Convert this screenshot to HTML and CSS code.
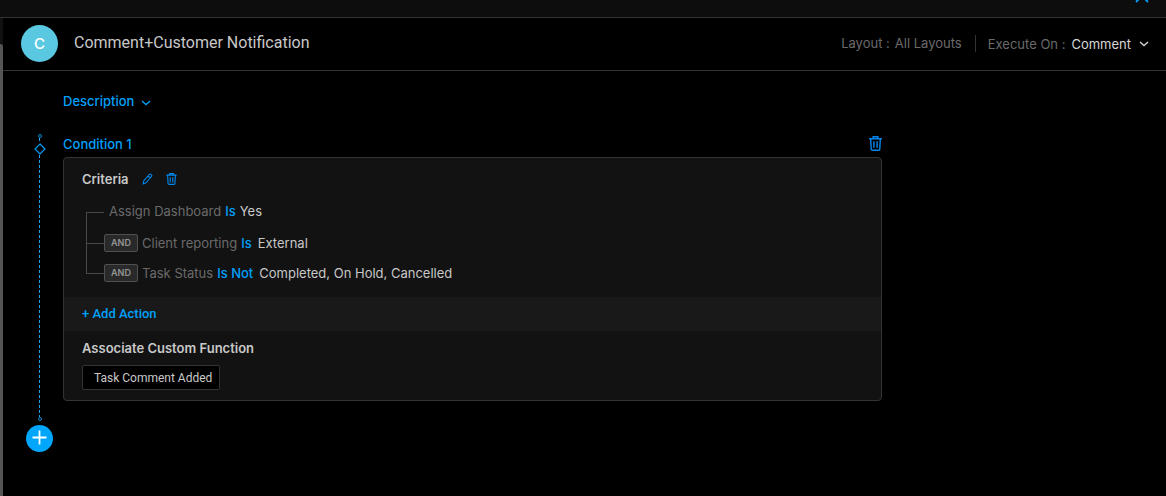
FILE: index.html
```html
<!DOCTYPE html>
<html lang="en">
<head>
<meta charset="utf-8">
<meta name="viewport" content="width=device-width, initial-scale=1">
<title>Comment+Customer Notification</title>
<link rel="stylesheet" href="styles.css">
</head>
<body>
<svg class="sprite" aria-hidden="true">
  <symbol id="trash" viewBox="0 0 12 14">
    <path d="M0 2.5H12M3.8 2.2V.7H8.2V2.2M1.5 2.8L2 12.2Q2.1 13.3 3.2 13.3H8.8Q9.9 13.3 10 12.2L10.5 2.8M4.5 5V11M7.5 5V11" fill="none" stroke="currentColor" stroke-width="1.3"/>
  </symbol>
  <symbol id="chevron" viewBox="0 0 10 6">
    <path d="M1 1L5 4.6L9 1" fill="none" stroke="currentColor" stroke-width="1.3"/>
  </symbol>
</svg>
<div class="page">
  <div class="topbar">
    <button class="close" type="button" aria-label="Close">
      <svg width="14" height="14" viewBox="0 0 14 14"><path d="M1 1L13 13M13 1L1 13" stroke="currentColor" stroke-width="1.8"/></svg>
    </button>
  </div>
  <div class="frame">
    <div class="scroll-track"><div class="scroll-thumb"></div></div>
    <div class="content">
      <header class="header">
        <span class="avatar">C</span>
        <h1 class="title">Comment+Customer Notification</h1>
        <div class="layout-info"><span>Layout :</span><span>All Layouts</span></div>
        <div class="execute">
          <span class="execute-label">Execute On :</span>
          <button class="execute-value" type="button">Comment
            <svg class="chevron" width="10" height="6"><use href="#chevron"/></svg>
          </button>
        </div>
      </header>
      <main class="main">
        <button class="description" type="button">Description
          <svg class="chevron-low" width="10" height="6"><use href="#chevron"/></svg>
        </button>
        <div class="workflow">
          <div class="rail">
            <span class="dot"></span>
            <span class="dash dash-short"></span>
            <svg class="diamond" width="12" height="12" viewBox="0 0 12 12"><path d="M6 1L11 6L6 11L1 6Z" fill="none" stroke="currentColor" stroke-width="1.2"/></svg>
            <span class="dash dash-long"></span>
            <span class="dot"></span>
            <button class="add" type="button" aria-label="Add condition">
              <svg width="15" height="15" viewBox="0 0 15 15"><path d="M7.5 .5V14.5M.5 7.5H14.5" stroke="currentColor" stroke-width="1.8"/></svg>
            </button>
          </div>
          <section class="condition">
            <div class="condition-head">
              <h2 class="condition-title">Condition 1</h2>
              <button class="icon-button" type="button" aria-label="Delete condition"><svg width="13" height="15"><use href="#trash"/></svg></button>
            </div>
            <div class="card">
              <div class="criteria">
                <div class="criteria-head">
                  <h3 class="criteria-title">Criteria</h3>
                  <button class="icon-button" type="button" aria-label="Edit criteria"><svg width="11" height="12" viewBox="0 0 11 12"><path d="M1.2 10.9L1.7 8L7.2 1.5Q7.9.7 8.8 1.4L9.4 1.9Q10.2 2.7 9.5 3.5L4 9.8ZM6 3L8.3 5" fill="none" stroke="currentColor" stroke-width="1.1"/></svg></button>
                  <button class="icon-button" type="button" aria-label="Delete criteria"><svg width="11" height="12"><use href="#trash"/></svg></button>
                </div>
                <ul class="rules">
                  <li class="rule rule-first"><span class="field">Assign Dashboard</span><span class="operator">Is</span><span class="value">Yes</span></li>
                  <li class="rule"><span class="tag">AND</span><span class="field">Client reporting</span><span class="operator">Is</span><span class="value value-wide">External</span></li>
                  <li class="rule"><span class="tag">AND</span><span class="field">Task Status</span><span class="operator">Is Not</span><span class="value value-wide">Completed, On Hold, Cancelled</span></li>
                </ul>
              </div>
              <div class="action-bar"><button class="add-action" type="button">+ Add Action</button></div>
              <div class="functions">
                <h3 class="functions-title">Associate Custom Function</h3>
                <span class="function-chip">Task Comment Added</span>
              </div>
            </div>
          </section>
        </div>
      </main>
    </div>
  </div>
</div>
</body>
</html>
```
FILE: styles.css
```css
* { box-sizing: border-box; }
body {
  margin: 0;
  background: #000;
  color: #c8c8c8;
  font-family: Inter, "Liberation Sans", sans-serif;
  font-size: 13px;
  line-height: 20px;
}
h1, h2, h3, ul { margin: 0; padding: 0; font-weight: 400; }
button { margin: 0; padding: 0; border: 0; background: none; color: #00a0fa; font: inherit; cursor: pointer; }
svg { display: block; flex: none; }
.sprite { position: absolute; width: 0; height: 0; }
.page { display: flex; flex-direction: column; min-height: 100vh; }
.topbar {
  display: flex;
  justify-content: flex-end;
  align-items: flex-start;
  height: 18px;
  padding-right: 17px;
  overflow: hidden;
  background: #0d0d0d;
  border-bottom: 1px solid #333;
}
.close { margin-top: -11px; }
.frame { display: flex; flex: 1; }
.scroll-track { display: flex; width: 3px; padding-top: 26px; background: #111; }
.scroll-thumb { flex: 1; background: #555; border-top-right-radius: 3px; }
.content { flex: 1; min-width: 0; }

.header {
  display: flex;
  align-items: center;
  height: 53px;
  padding: 0 17px 1px 18px;
  border-bottom: 1px solid #333;
}
.avatar {
  display: grid;
  place-items: center;
  width: 37px;
  height: 37px;
  margin-right: 16px;
  border-radius: 50%;
  background: #5bc8e2;
  color: #fff;
  font-size: 15px;
  font-weight: 500;
}
.title { flex: 1; padding-bottom: 1px; font-family: Roboto, "Liberation Sans", sans-serif; font-size: 16px; }
.layout-info { display: flex; gap: 5px; padding-bottom: 2px; color: #6a6a6a; }
.execute {
  display: flex;
  align-items: center;
  height: 17px;
  margin-left: 13px;
  padding-left: 12px;
  border-left: 1px solid #333;
}
.execute-label { margin-right: 6px; color: #6a6a6a; }
.execute-value { display: flex; align-items: center; gap: 8px; color: #d8d8d8; }

.main { padding: 20px 17px 0 23px; }
.description {
  display: flex;
  align-items: center;
  gap: 7px;
  margin-left: 37px;
  font-weight: 500;
}
.chevron-low { margin-top: 4px; }
.workflow { display: flex; gap: 10px; margin-top: 23px; }
.rail { display: flex; flex-direction: column; align-items: center; width: 27px; color: #00a0fa; }
.dot { width: 4px; height: 4px; border: 1px solid #0b86cc; border-radius: 50%; }
.dash { width: 1px; background: repeating-linear-gradient(#18a4ee 0 3px, transparent 3px 5px); }
.dash-short { height: 5px; }
.dash-long { flex: 1; }
.add {
  display: grid;
  place-items: center;
  width: 27px;
  height: 27px;
  margin-top: 4px;
  padding-bottom: 3px;
  border-radius: 50%;
  background: #00a6fb;
  color: #fff;
}
.condition { flex: 1; max-width: 819px; padding-bottom: 51px; }
.condition-head { display: flex; justify-content: space-between; align-items: center; height: 23px; padding-bottom: 4px; }
.condition-title { color: #00a0fa; font-size: 13px; font-weight: 500; }
.icon-button { color: #0088ee; }
.card { overflow: hidden; border: 1px solid #333; border-radius: 4px; background: #121212; }
.criteria { padding: 11px 18px 9px; }
.criteria-head { display: flex; align-items: center; gap: 13px; }
.criteria-title { font-size: 13px; font-weight: 600; }
.rules { padding: 8px 0 0 4px; list-style: none; }
.rule { position: relative; display: flex; align-items: center; min-height: 30px; padding: 5px 0 5px 18px; }
.rule-first { padding: 4px 0 7px 23px; }
/* Connector from the group's trunk to each rule. */
.rule::before {
  content: "";
  position: absolute;
  left: 0;
  top: -16px;
  width: 18px;
  height: 31px;
  border-left: 1px solid #484848;
  border-bottom: 1px solid #484848;
}
.rule-first::before { top: 14px; height: 1px; border-left: 0; }
.tag {
  width: 34px;
  margin-right: 4px;
  border: 1px solid #505050;
  border-radius: 2px;
  background: #292929;
  color: #969696;
  font-size: 9px;
  font-weight: 600;
  line-height: 16px;
  text-align: center;
}
.field { color: #6a6a6a; }
.operator { margin-left: 4px; color: #00a0fa; font-weight: 500; }
.value { margin-left: 4px; }
.value-wide { margin-left: 6px; }
.action-bar { padding: 7px 18px; background: #191919; }
.add-action { display: block; font-family: Roboto, "Liberation Sans", sans-serif; font-weight: 500; }
.functions { padding: 7px 18px 10px; }
.functions-title { margin-bottom: 7px; font-size: 13px; font-weight: 600; }
.function-chip {
  display: block;
  width: fit-content;
  padding: 2px 7px 1px 11px;
  border: 1px solid #333;
  border-radius: 2px;
  background: #000;
  font-family: Roboto, "Liberation Sans", sans-serif;
  font-size: 12px;
}
```
